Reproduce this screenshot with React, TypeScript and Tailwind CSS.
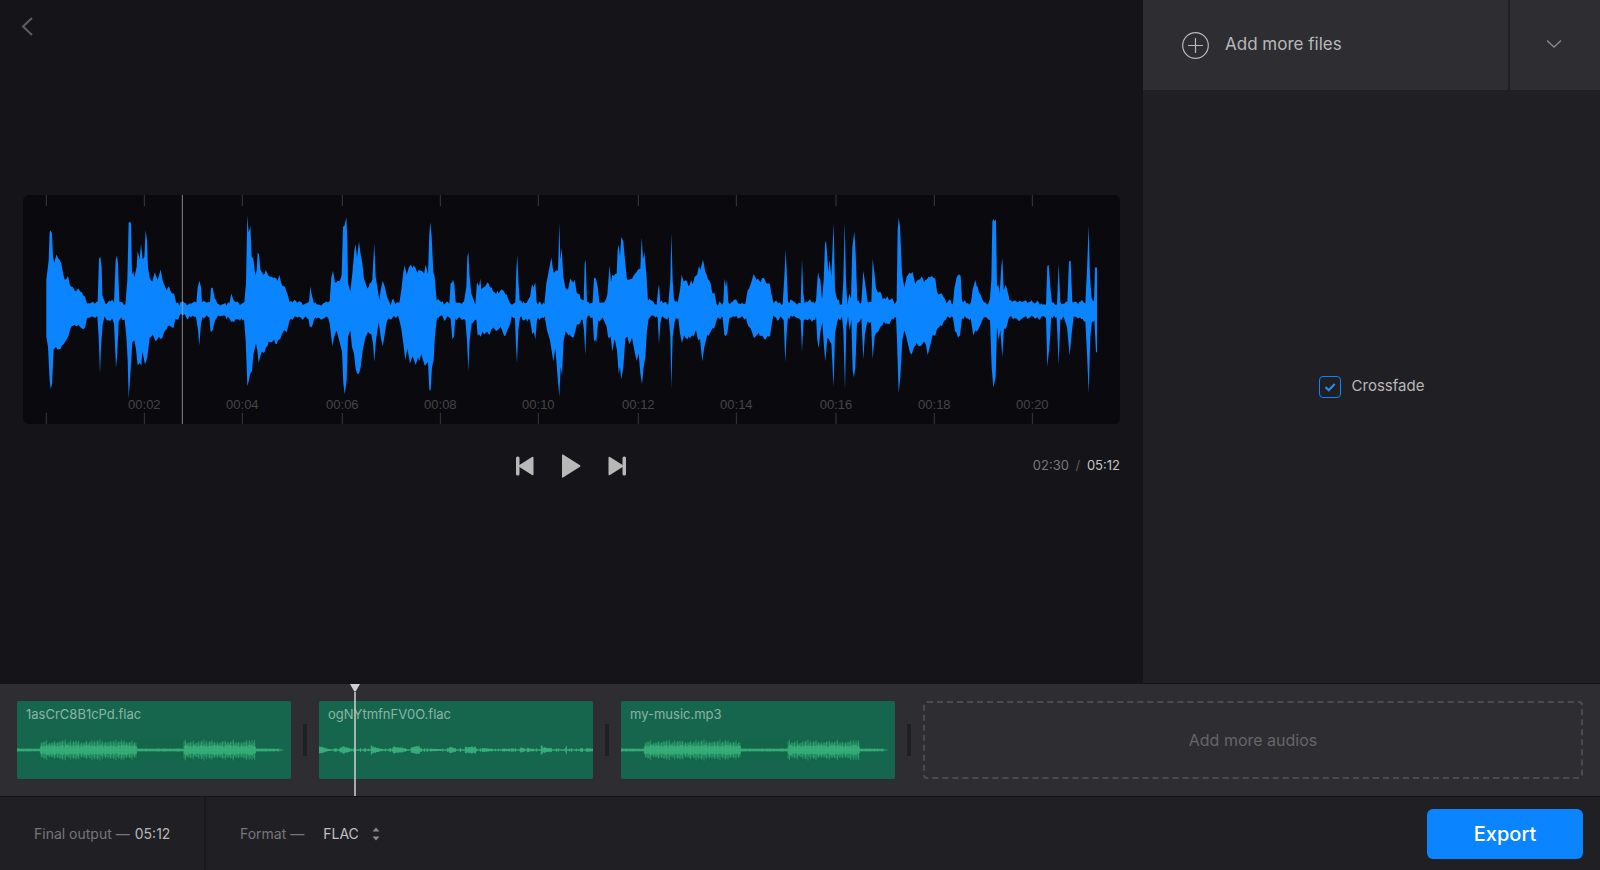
import { Fragment, useState } from 'react'

type Point = [number, number]

// Coordinates are in viewBox units, relative to the start of the chunk.
const CHUNK_WIDTH = 1140

const chunks: { top: Point[]; bottom: Point[] }[] = [
    {
        top: [
            [139, 300], [146, 240], [149, 155], [152, 151], [156, 160], [159, 230], [163, 248], [169, 223], [175, 235], [184, 250], [190, 284],
            [198, 298], [204, 288], [209, 312], [218, 320], [224, 331], [232, 327], [246, 336], [255, 350], [261, 370], [275, 367], [285, 371],
            [293, 364], [297, 236], [301, 230], [305, 260], [307, 345], [316, 370], [328, 362], [336, 358], [342, 368], [347, 240], [351, 226],
            [354, 250], [358, 364], [368, 367], [376, 372], [382, 300], [386, 128], [389, 125], [393, 130], [396, 284], [400, 272], [403, 292],
            [410, 260], [413, 213], [419, 238], [423, 190], [428, 238], [433, 230], [437, 150], [441, 180], [444, 262], [449, 292], [457, 304],
            [464, 277], [473, 300], [482, 268], [488, 302], [500, 331], [507, 319], [516, 341], [522, 340], [529, 369], [538, 376], [545, 366],
            [556, 368], [570, 370], [580, 366], [589, 368], [593, 322], [598, 302], [603, 320], [606, 366], [620, 368], [630, 366], [633, 324],
            [638, 322], [644, 354], [656, 372], [672, 371], [688, 370], [694, 340], [700, 358], [708, 366], [725, 371], [733, 366], [738, 310],
            [742, 106], [746, 158], [751, 138], [755, 230], [760, 236], [766, 286], [770, 270], [773, 218], [777, 222], [781, 268], [790, 284],
            [797, 270], [806, 288], [815, 290], [824, 292], [833, 302], [838, 284], [843, 306], [855, 320], [862, 340], [869, 366], [880, 363],
            [892, 368], [904, 366], [916, 370], [927, 366], [931, 318], [935, 342], [942, 370], [956, 373], [970, 369], [984, 367], [989, 362],
            [994, 292], [999, 272], [1005, 307], [1018, 303], [1025, 284], [1029, 140], [1033, 138], [1039, 112], [1042, 180], [1044, 310],
            [1051, 334], [1057, 280], [1063, 212], [1067, 192], [1071, 232], [1077, 184], [1081, 216], [1087, 250], [1092, 296], [1102, 325],
            [1109, 310], [1117, 298], [1120, 240], [1123, 190], [1127, 290], [1132, 320], [1138, 360],
        ],
        bottom: [
            [139, 470], [144, 500], [149, 600], [152, 627], [156, 612], [161, 508], [168, 500], [178, 507], [186, 496], [196, 484], [206, 466],
            [211, 446], [224, 434], [236, 434], [246, 445], [255, 442], [261, 414], [274, 409], [285, 414], [292, 409], [296, 470], [300, 581],
            [303, 500], [308, 432], [314, 408], [325, 420], [336, 414], [342, 430], [348, 563], [352, 520], [356, 425], [364, 412], [374, 418],
            [379, 470], [383, 540], [386, 655], [390, 600], [397, 486], [403, 480], [408, 508], [413, 556], [419, 548], [424, 556], [427, 514],
            [435, 552], [442, 530], [449, 473], [458, 462], [466, 482], [477, 470], [487, 474], [496, 450], [508, 436], [520, 444], [527, 415],
            [538, 408], [550, 405], [560, 414], [574, 411], [588, 410], [594, 450], [598, 496], [603, 430], [608, 410], [628, 412], [632, 456],
            [638, 450], [645, 420], [656, 405], [672, 406], [690, 418], [702, 426], [712, 417], [732, 418], [737, 480], [742, 617], [747, 600],
            [751, 580], [756, 572], [760, 524], [768, 490], [772, 510], [776, 548], [782, 524], [790, 518], [798, 500], [806, 484], [815, 486],
            [822, 478], [830, 492], [840, 477], [850, 454], [860, 456], [869, 420], [880, 415], [892, 412], [904, 414], [916, 408], [926, 418],
            [929, 438], [934, 442], [942, 418], [956, 412], [970, 415], [984, 412], [989, 430], [997, 497], [1003, 468], [1010, 452],
            [1020, 490], [1026, 515], [1030, 610], [1034, 642], [1040, 600], [1044, 470], [1051, 450], [1056, 500], [1062, 520], [1067, 566],
            [1075, 583], [1082, 560], [1088, 512], [1096, 472], [1104, 455], [1114, 462], [1119, 490], [1123, 545], [1128, 480], [1136, 426],
        ],
    },
    {
        top: [
            [2, 330], [8, 302], [14, 318], [21, 350], [32, 375], [40, 356], [46, 372], [58, 368], [64, 330], [70, 276], [74, 256], [80, 284],
            [86, 264], [93, 255], [106, 262], [112, 278], [121, 271], [132, 282], [137, 254], [144, 282], [148, 160], [151, 126], [155, 170],
            [160, 276], [164, 290], [170, 362], [184, 366], [196, 370], [208, 371], [212, 308], [219, 298], [223, 312], [227, 366], [240, 368],
            [252, 364], [259, 320], [262, 230], [265, 216], [269, 290], [274, 340], [286, 373], [291, 306], [297, 318], [301, 296], [304, 328],
            [314, 320], [326, 310], [335, 322], [344, 336], [356, 340], [364, 328], [376, 342], [386, 360], [396, 374], [406, 366], [409, 270],
            [412, 225], [415, 300], [419, 362], [430, 363], [440, 368], [450, 350], [456, 312], [461, 322], [466, 306], [470, 366], [482, 367],
            [493, 372], [499, 310], [506, 274], [514, 232], [520, 276], [534, 272], [538, 128], [541, 240], [545, 204], [550, 290],
            [556, 322], [564, 328], [571, 296], [577, 304], [584, 298], [590, 336], [598, 340], [605, 358], [611, 360], [614, 250], [617, 238],
            [621, 366], [629, 371], [638, 367], [642, 292], [648, 296], [653, 320], [658, 366], [671, 368], [682, 344], [686, 290], [689, 256],
            [693, 306], [697, 284], [710, 280], [713, 210], [716, 194], [720, 228], [724, 170], [730, 184], [735, 240], [741, 300], [748, 300],
            [760, 288], [770, 276], [781, 266], [785, 172], [789, 236], [793, 216], [799, 280], [804, 362], [816, 362], [830, 373],
            [834, 330], [837, 312], [841, 366], [854, 366], [865, 370], [871, 300], [874, 158], [878, 300], [882, 358], [893, 368], [900, 330],
            [905, 284], [911, 304], [918, 300], [925, 318], [933, 300], [938, 312], [944, 290], [952, 282], [957, 258], [961, 270], [969, 238],
            [976, 276], [984, 298], [992, 310], [997, 340], [1003, 338], [1010, 372], [1022, 368], [1030, 366], [1033, 296], [1038, 320],
            [1041, 298], [1045, 366], [1058, 364], [1070, 360], [1082, 372], [1096, 371], [1103, 330], [1112, 312], [1121, 282], [1130, 300],
        ],
        bottom: [
            [2, 470], [8, 498], [12, 476], [18, 436], [27, 414], [40, 408], [55, 409], [63, 440], [70, 490], [76, 540], [82, 505], [90, 550],
            [98, 528], [107, 554], [114, 532], [118, 542], [124, 522], [130, 542], [137, 555], [144, 546], [148, 630], [152, 630], [156, 560],
            [161, 540], [165, 465], [171, 412], [184, 406], [195, 421], [202, 408], [212, 416], [217, 476], [222, 470], [226, 416], [240, 412],
            [256, 420], [261, 480], [265, 574], [269, 480], [275, 430], [289, 418], [293, 466], [302, 470], [308, 454], [318, 458], [326, 462],
            [340, 442], [352, 450], [362, 440], [373, 468], [382, 450], [391, 430], [395, 408], [405, 414], [408, 500], [411, 549], [415, 450],
            [420, 412], [434, 420], [450, 418], [457, 462], [462, 456], [466, 478], [471, 418], [483, 414], [494, 408], [501, 450], [510, 480],
            [520, 544], [526, 504], [532, 580], [538, 650], [542, 560], [546, 584], [551, 480], [557, 454], [568, 462], [577, 472], [584, 460],
            [591, 432], [600, 430], [608, 420], [612, 450], [616, 525], [620, 416], [628, 406], [638, 412], [642, 484], [649, 486], [655, 420],
            [668, 412], [680, 440], [684, 470], [692, 468], [697, 514], [704, 476], [711, 510], [716, 580], [720, 560], [724, 598], [730, 560],
            [736, 474], [742, 470], [748, 492], [756, 472], [763, 510], [770, 542], [776, 520], [781, 580], [786, 612], [791, 560], [796, 530],
            [801, 450], [806, 416], [818, 406], [833, 412], [837, 492], [841, 430], [848, 408], [858, 416], [866, 410], [871, 470], [874, 628],
            [878, 470], [884, 424], [895, 414], [900, 460], [906, 488], [912, 466], [922, 478], [933, 470], [940, 470], [948, 450], [954, 480],
            [960, 476], [967, 543], [973, 500], [982, 464], [994, 450], [1006, 434], [1013, 412], [1028, 412], [1033, 464], [1042, 460],
            [1048, 414], [1066, 410], [1082, 412], [1098, 414], [1104, 436], [1112, 444], [1122, 474], [1132, 464],
        ],
    },
    {
        top: [
            [2, 306], [10, 293], [18, 308], [29, 310], [34, 340], [41, 370], [52, 366], [68, 372], [73, 290], [77, 208], [80, 270], [84, 364],
            [96, 361], [108, 370], [122, 369], [126, 236], [130, 340], [134, 370], [146, 362], [156, 368], [168, 362], [174, 276], [181, 300],
            [186, 358], [191, 300], [195, 190], [198, 182], [202, 230], [205, 276], [209, 240], [214, 290], [221, 128], [225, 330],
            [232, 360], [246, 373], [250, 300], [254, 126], [258, 300], [262, 374], [268, 340], [273, 356], [277, 200], [283, 154], [287, 220],
            [292, 362], [304, 368], [310, 272], [317, 320], [323, 366], [334, 366], [338, 236], [343, 276], [348, 324], [354, 338], [360, 334],
            [368, 358], [382, 348], [390, 360], [398, 356], [404, 372], [410, 362], [413, 150], [416, 112], [420, 140], [426, 280], [433, 322],
            [440, 290], [448, 278], [458, 276], [466, 312], [476, 298], [484, 290], [492, 306], [506, 290], [516, 288], [526, 296], [531, 334],
            [542, 340], [550, 350], [560, 370], [572, 361], [579, 370], [583, 326], [590, 292], [602, 288], [606, 362], [620, 370], [633, 366],
            [638, 328], [646, 300], [653, 320], [662, 344], [672, 366], [682, 374], [690, 355], [694, 300], [697, 125], [700, 116], [704, 124],
            [708, 118], [711, 320], [715, 312], [719, 340], [724, 256], [727, 234], [731, 330], [737, 314], [742, 330], [749, 360], [762, 361],
            [772, 366], [790, 364], [806, 366], [820, 367], [836, 366], [848, 374], [858, 374], [862, 258], [866, 254], [871, 320], [876, 368],
            [891, 371], [896, 252], [901, 366], [914, 370], [922, 366], [927, 244], [932, 242], [937, 366], [950, 366], [962, 364], [976, 370],
            [981, 270], [986, 136], [990, 290], [995, 354], [1002, 362], [1005, 262], [1011, 262],
        ],
        bottom: [
            [4, 466], [13, 477], [22, 468], [30, 468], [35, 434], [40, 406], [52, 422], [62, 408], [71, 420], [76, 547], [80, 460], [84, 412],
            [98, 410], [112, 414], [122, 420], [126, 514], [131, 420], [144, 420], [160, 418], [168, 410], [172, 480], [176, 504], [182, 450],
            [187, 426], [192, 500], [196, 543], [202, 474], [214, 490], [221, 621], [225, 460], [232, 424], [246, 408], [250, 450],
            [255, 628], [259, 440], [264, 408], [269, 450], [274, 418], [278, 570], [282, 592], [286, 560], [291, 430], [304, 414],
            [310, 538], [315, 460], [322, 424], [333, 424], [338, 536], [344, 470], [352, 456], [362, 438], [372, 424], [388, 432], [400, 418],
            [408, 412], [411, 480], [416, 640], [421, 590], [427, 480], [433, 450], [438, 466], [446, 500], [455, 523], [462, 500], [470, 488],
            [480, 498], [490, 486], [498, 494], [503, 525], [512, 490], [518, 464], [526, 466], [533, 444], [546, 438], [558, 418], [566, 410],
            [579, 412], [585, 454], [594, 472], [600, 466], [606, 414], [620, 415], [632, 414], [640, 466], [646, 450], [656, 446], [668, 418],
            [680, 412], [690, 420], [695, 560], [700, 622], [707, 590], [711, 440], [716, 480], [721, 450], [727, 532], [732, 444], [740, 440],
            [747, 412], [762, 414], [774, 420], [790, 412], [806, 414], [820, 410], [836, 417], [848, 408], [858, 414], [862, 560], [869, 490],
            [874, 410], [890, 412], [896, 554], [901, 418], [910, 408], [921, 440], [929, 526], [936, 450], [941, 410], [956, 414], [976, 424],
            [981, 520], [986, 640], [991, 470], [996, 424], [1003, 420], [1008, 516], [1011, 516],
        ],
    },
]

const marks = [
    { x: 139, label: '' },
    { x: 433, label: '00:02' },
    { x: 727, label: '00:04' },
    { x: 1027, label: '00:06' },
    { x: 1321, label: '00:08' },
    { x: 1615, label: '00:10' },
    { x: 1915, label: '00:12' },
    { x: 2209, label: '00:14' },
    { x: 2508, label: '00:16' },
    { x: 2803, label: '00:18' },
    { x: 3097, label: '00:20' },
]

const VIEW = { x: 69, y: 45, width: 3291, height: 686 }

const noise = (n: number) => {
    const value = Math.sin(n * 12.9898) * 43758.5453
    return value - Math.floor(value)
}

// Adds the small ripple that runs along the quiet parts of the signal
function outline(side: 'top' | 'bottom') {
    const points: Point[] = chunks.flatMap((chunk, i) =>
        chunk[side].map(([x, y]): Point => [x + i * CHUNK_WIDTH, y])
    )
    const result: Point[] = []
    points.forEach(([x, y], i) => {
        result.push([x, y])
        const next = points[i + 1]
        if (!next || Math.abs(next[1] - y) > 24) return
        for (let px = x + 4; px < next[0] - 2; px += 4) {
            const t = (px - x) / (next[0] - x)
            result.push([px, y + (next[1] - y) * t + Math.round((noise(px) - 0.5) * 14)])
        }
    })
    return result
}

const previewPath = `M${[...outline('top'), ...outline('bottom').reverse()].map((p) => p.join(' ')).join('L')}Z`

function bars(level: (x: number) => number, seed: number, step: number) {
    let path = ''
    for (let x = 1; x < 822; x += step) {
        const up = level(x) * (0.65 + noise(x + seed) * 0.35)
        if (up > 0) path += `M${x} ${-up}V${up}`
    }
    return path
}

const inBlock = (x: number) => (x >= 70 && x < 360) || (x >= 500 && x < 717)

const musicBars = bars((x) => (inBlock(x) ? 32 : 0), 5, 8)
const musicBody = bars((x) => (inBlock(x) ? 26 : x > 790 ? 0 : 6), 9, 4)
const musicCore = bars((x) => (inBlock(x) ? 15 : x > 785 ? 0 : 4), 2, 3)

// [start, end, level at start, level at end]
const hits = [
    [0, 34, 13, 2], [63, 68, 11, 7], [68, 98, 14, 4], [156, 161, 18, 12], [161, 192, 12, 3],
    [222, 250, 12, 8], [252, 264, 7, 4], [277, 303, 11, 12], [334, 364, 5, 3], [391, 410, 11, 6],
    [439, 470, 10, 11], [494, 520, 7, 4], [548, 570, 6, 3], [602, 618, 8, 7], [624, 645, 7, 4],
    [666, 670, 15, 12], [670, 698, 9, 6], [740, 744, 16, 12], [782, 788, 8, 5], [802, 822, 6, 5],
]

const voiceBars = bars(
    (x) => {
        const hit = hits.find(([start, end]) => x >= start && x <= end)
        if (!hit) return noise(x * 3) > 0.75 ? 6 : 1
        const [start, end, from, to] = hit
        return from + ((to - from) * (x - start)) / (end - start)
    },
    4,
    3
)

function MusicWave() {
    return (
        <g stroke="#3bb57f" strokeWidth="3">
            <path d={musicBars} opacity="0.6" />
            <path d={musicBody} opacity="0.5" />
            <path d={musicCore} opacity="0.85" />
            <path d="M0 0H800" strokeWidth="2" />
        </g>
    )
}

function VoiceWave() {
    return (
        <g stroke="#3bb57f" strokeWidth="3">
            <path d={voiceBars} />
            <path d="M0 0H822" />
        </g>
    )
}

const clips = [
    { name: '1asCrC8B1cPd.flac', Wave: MusicWave },
    { name: 'ogNYtmfnFV0O.flac', Wave: VoiceWave },
    { name: 'my-music.mp3', Wave: MusicWave },
]

function Preview() {
    return (
        <div className="relative h-[229px] overflow-hidden rounded-md bg-[#0a0a0e]">
            <svg
                className="block h-full w-full"
                viewBox={`${VIEW.x} ${VIEW.y} ${VIEW.width} ${VIEW.height}`}
                preserveAspectRatio="none"
                aria-hidden="true"
            >
                {marks.map(({ x }) => (
                    <path key={x} d={`M${x} 45V79M${x} 697V731`} stroke="#3a3a3d" strokeWidth="3" />
                ))}
                <path d={previewPath} fill="#0a85ff" />
                <path d="M547 45V731" stroke="#a5a5a5" strokeOpacity="0.8" strokeWidth="3" />
            </svg>
            {marks.filter((mark) => mark.label).map(({ x, label }) => (
                <span
                    key={label}
                    className="absolute bottom-[11px] -translate-x-1/2 font-['Liberation_Sans',Arial,sans-serif] text-[13px] leading-4 text-[#454548]"
                    style={{ left: `${((x - VIEW.x) / VIEW.width) * 100}%` }}
                >
                    {label}
                </span>
            ))}
        </div>
    )
}

export default function App() {
    const [crossfade, setCrossfade] = useState(true)

    return (
        <div className="flex min-h-screen flex-col bg-[#151419] font-[Inter,sans-serif] text-[#b8b8ba]">
            <div className="flex flex-1">
                {/* Player */}
                <main className="relative flex flex-1 flex-col justify-center px-[23px]">
                    <button aria-label="Back" className="absolute top-4 left-5 text-[#5d5d60]">
                        <svg width="14" height="20" viewBox="0 0 14 20" fill="none" stroke="currentColor" strokeWidth="2">
                            <path d="M12 2L3 10.500L12 19" />
                        </svg>
                    </button>

                    <Preview />

                    <div className="mt-[18px] grid h-12 grid-cols-3 items-center">
                        <div className="col-start-2 flex items-center justify-center gap-[27px] text-[#b8b8b8]">
                            <button aria-label="Previous">
                                <svg width="19" height="20" viewBox="0 0 19 20" fill="currentColor">
                                    <rect x="1" y="0.500" width="3.500" height="19" rx="1.500" />
                                    <path d="M17 1Q18.500 0 18.500 2V18Q18.500 20 17 19L4 10.800V9.200Z" />
                                </svg>
                            </button>
                            <button aria-label="Play">
                                <svg width="20" height="24" viewBox="0 0 20 24" fill="currentColor">
                                    <path d="M1 1Q1 0 2 .6L19 11.300Q20 12 19 12.700L2 23.400Q1 24 1 23Z" />
                                </svg>
                            </button>
                            <button aria-label="Next">
                                <svg width="19" height="20" viewBox="0 0 19 20" fill="currentColor">
                                    <rect x="14.500" y="0.500" width="3.500" height="19" rx="1.500" />
                                    <path d="M2 1Q.5 0 .5 2V18Q.5 20 2 19L15 10.800V9.200Z" />
                                </svg>
                            </button>
                        </div>
                        <p className="text-right text-[13px] text-[#77777a]">
                            02:30 <span className="mx-[3px] text-[#5a5a5d]">/</span> <span className="text-[#c4c4c5]">05:12</span>
                        </p>
                    </div>
                </main>

                {/* Options */}
                <aside className="flex w-[457px] flex-col border-b border-[#151419] bg-[#201f24]">
                    <div className="flex h-[90px] bg-[#2e2d32]">
                        <button className="flex flex-1 items-center gap-4 pl-[39px] text-[17px]">
                            <svg width="27" height="27" viewBox="0 0 27 27" fill="none" stroke="currentColor" strokeWidth="1.200">
                                <circle cx="13.500" cy="13.500" r="12.800" />
                                <path d="M13.500 6V21M6 13.500H21" />
                            </svg>
                            Add more files
                        </button>
                        <button aria-label="More sources" className="flex w-[92px] items-center justify-center border-l-2 border-[#201f24] text-[#8a8a8d]">
                            <svg width="16" height="10" viewBox="0 0 16 10" fill="none" stroke="currentColor" strokeWidth="1.300">
                                <path d="M0 0.500L7 7L14 0.500" />
                            </svg>
                        </button>
                    </div>
                    <div className="flex flex-1 items-center justify-center">
                        <label className="flex items-center gap-[11px] text-[15px]">
                            <span className="relative flex">
                                <input
                                    type="checkbox"
                                    checked={crossfade}
                                    onChange={(e) => setCrossfade(e.target.checked)}
                                    className="peer size-[22px] appearance-none rounded border border-[#0a84ff]"
                                />
                                <svg
                                    className="pointer-events-none absolute inset-0 hidden peer-checked:block"
                                    width="22"
                                    height="22"
                                    viewBox="0 0 22 22"
                                    fill="none"
                                    stroke="#2f8df5"
                                    strokeWidth="2"
                                >
                                    <path d="M6.500 11L9.700 14.200L15.700 8" />
                                </svg>
                            </span>
                            Crossfade
                        </label>
                    </div>
                </aside>
            </div>

            {/* Timeline */}
            <section className="relative flex h-28 items-center gap-3 bg-[#2e2d32] px-[17px]">
                {clips.map(({ name, Wave }) => (
                    <Fragment key={name}>
                        <div className="flex h-[78px] w-[274px] shrink-0 flex-col overflow-hidden rounded-xs bg-[#15664c]">
                            <span className="px-[9px] pt-1 text-[13px] leading-[18px] text-[#8bb5a6]">{name}</span>
                            <svg className="mt-4 block h-[22px] w-full" viewBox="0 -33 822 66" preserveAspectRatio="none" aria-hidden="true">
                                <Wave />
                            </svg>
                        </div>
                        <span className="h-8 w-1 shrink-0 bg-[#201f24]" />
                    </Fragment>
                ))}
                <button className="h-[78px] flex-1 rounded border-2 border-dashed border-[#4b4a4f] text-base text-[#66656a]">
                    Add more audios
                </button>
                <div className="absolute inset-y-0 left-[350px] flex w-[10px] flex-col items-center">
                    <svg width="10" height="8" viewBox="0 0 10 8" fill="#cfcfcf">
                        <path d="M0 0H10L6 7Q5 8 4 7Z" />
                    </svg>
                    <span className="w-[2px] flex-1 bg-[#c8c8c8]/80" />
                </div>
            </section>

            {/* Footer */}
            <footer className="flex h-[74px] items-stretch border-t border-[#151419] bg-[#201f24] pr-[17px] text-sm text-[#77767a]">
                <p className="flex w-[206px] items-center gap-[5px] border-r-2 border-[#1a191e] pl-[34px]">
                    Final output — <span className="text-[#b8b8ba]">05:12</span>
                </p>
                <label className="flex items-center pl-[34px]">
                    Format —
                    <span className="relative ml-4 flex items-center text-[#c0c0c2]">
                        <select defaultValue="FLAC" className="w-[60px] appearance-none bg-transparent pl-[3px] outline-none">
                            <option>FLAC</option>
                            <option>MP3</option>
                            <option>WAV</option>
                        </select>
                        <svg
                            className="pointer-events-none absolute right-0"
                            width="8"
                            height="14"
                            viewBox="0 0 8 14"
                            fill="#8a8a8d"
                        >
                            <path d="M0.500 4.500L4 .5L7.500 4.500ZM.5 9.500H7.500L4 13.500Z" />
                        </svg>
                    </span>
                </label>
                <button className="my-auto ml-auto h-[50px] w-[156px] rounded-md bg-[#0a84ff] text-xl font-medium text-white">
                    Export
                </button>
            </footer>
        </div>
    )
}
